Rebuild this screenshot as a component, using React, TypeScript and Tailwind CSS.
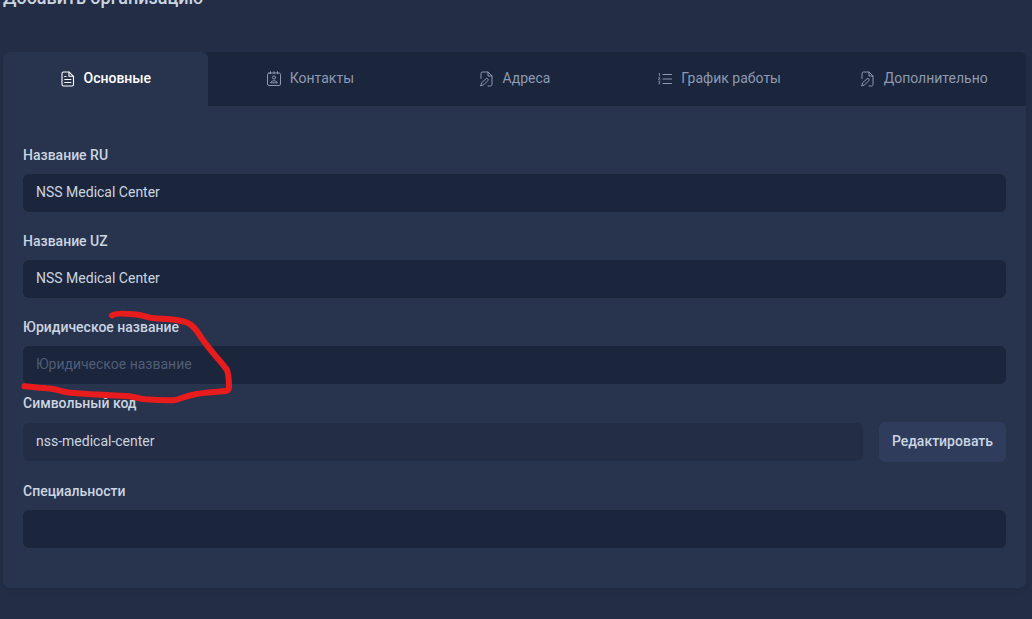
import React, { useState } from 'react';
import clsx from 'clsx';

const iconProps = {
  width: 16,
  height: 18,
  viewBox: '0 0 16 18',
  fill: 'none',
  stroke: 'currentColor',
  strokeLinecap: 'round' as const,
  strokeLinejoin: 'round' as const,
  'aria-hidden': true,
};

const FileTextIcon = () => (
  <svg {...iconProps} strokeWidth={1.1}>
    <path d="M9 3H3.500A1.500 1.500 0 0 0 2 4.500v11A1.500 1.500 0 0 0 3.500 17h8.500a1.500 1.500 0 0 0 1.500-1.500V7.300L9 3Z" />
    <path d="M9 3.200v4.100h4.300M4.700 7.500h1.300M4.700 10.500h6.200M4.700 13.500h6.200" />
  </svg>
);

const ContactIcon = () => (
  <svg {...iconProps} strokeWidth={1}>
    <rect x="1.500" y="4" width="13" height="12.500" rx="1.500" />
    <path d="M4.500 2.700v2M8 2.700v2M11.500 2.700v2" />
    <circle cx="8" cy="8.500" r="1.600" />
    <path d="M4.700 13.500c.4-1.200 1.800-1.700 3.300-1.700s2.900.5 3.300 1.700Z" />
  </svg>
);

const FileEditIcon = () => (
  <svg {...iconProps} strokeWidth={1}>
    <path d="M2 9.500V4.500A1.500 1.500 0 0 1 3.500 3H9l4 4v8.500a1.500 1.500 0 0 1-1.500 1.500H9" />
    <path d="M9 3.200V7h3.900" />
    <path d="M1.900 16.700l.7-3 4.400-3.900a1.300 1.300 0 0 1 1.800 1.900l-4.200 4.200-2.700.8Z" />
  </svg>
);

const ListIcon = () => (
  <svg {...iconProps} strokeWidth={1.1}>
    <path d="M6 5.500h8.500M6 10h8.500M6 14.500h8.500" />
    <path d="M1.800 4.900l.8-.5v2.500M1.600 8.700h1.300l-1.300 2.200h1.500M1.600 12.700h1.500l-.8 1c1.200.2.800 1.500-.7 1.200" strokeWidth={0.8} />
  </svg>
);

const tabs = [
  { id: 'main', label: 'Основные', icon: FileTextIcon },
  { id: 'contacts', label: 'Контакты', icon: ContactIcon },
  { id: 'addresses', label: 'Адреса', icon: FileEditIcon },
  { id: 'schedule', label: 'График работы', icon: ListIcon },
  { id: 'extra', label: 'Дополнительно', icon: FileEditIcon },
];

interface FieldProps {
  id: string;
  label: string;
  value?: string;
  placeholder?: string;
}

const Field: React.FC<FieldProps> = ({ id, label, value, placeholder }) => (
  <div>
    <label htmlFor={id} className="block mb-[10px] font-medium leading-[18px]">{label}</label>
    <input
      id={id}
      type="text"
      defaultValue={value}
      placeholder={placeholder}
      className="block w-full rounded-md bg-[#1b253b] px-[13px] pt-2 pb-[10px] leading-5 placeholder:text-[#505d78] focus:outline-none"
    />
  </div>
);

const App: React.FC = () => {
  const [active, setActive] = useState('main');

  return (
    <div className="relative min-h-screen overflow-hidden bg-[#232d45] pl-[3px] pr-[6px] font-['Roboto',sans-serif] text-sm text-[#cbd5e0]">
      <h2 className="-mt-4 mb-10 text-lg font-medium leading-7">Добавить организацию</h2>

      <div className="rounded-md bg-[#28334e] shadow-md shadow-black/5">
        <div role="tablist" className="grid grid-cols-5 rounded-t-md bg-[#1b253b]">
          {tabs.map(({ id, label, icon: Icon }) => (
            <button
              key={id}
              type="button"
              role="tab"
              aria-selected={active === id}
              onClick={() => setActive(id)}
              className={clsx(
                'flex items-center justify-center gap-2 pt-4 pb-[18px] leading-5',
                active === id ? 'rounded-t-md bg-[#28334e] font-medium text-white' : 'text-[#8d9ab3]'
              )}
            >
              <Icon />
              {label}
            </button>
          ))}
        </div>

        <form className="px-5 py-10" onSubmit={(e) => e.preventDefault()}>
          <div className="space-y-5">
            <Field id="name-ru" label="Название RU" value="NSS Medical Center" />
            <Field id="name-uz" label="Название UZ" value="NSS Medical Center" />
            <Field id="legal-name" label="Юридическое название" placeholder="Юридическое название" />
          </div>

          <div className="mt-[10px]">
            <label htmlFor="code" className="block mb-[10px] font-medium leading-[18px]">Символьный код</label>
            <div className="flex items-center gap-4">
              <input
                id="code"
                type="text"
                readOnly
                value="nss-medical-center"
                className="min-w-0 flex-1 rounded-md bg-[#232d45] px-[13px] pt-2 pb-[10px] leading-5 focus:outline-none"
              />
              <button type="button" className="rounded-md bg-[#303c5c] px-[13px] pt-[9px] pb-[11px] font-medium leading-5">
                Редактировать
              </button>
            </div>
          </div>

          <div className="mt-5">
            <Field id="specialities" label="Специальности" />
          </div>
        </form>
      </div>

      {/* hand-drawn marker around the legal name */}
      <svg
        className="pointer-events-none absolute left-0 top-[300px]"
        width="250"
        height="120"
        viewBox="0 0 250 120"
        fill="none"
        stroke="#e81c1c"
        strokeWidth="6"
        strokeLinecap="round"
        strokeLinejoin="round"
        aria-hidden="true"
      >
        <path d="M112 15.500C115 12.500 126 13.500 134 14.300C144 15 148 18 155 18.300C165 18.600 176 18.500 187 22.500C196 26 199 36 206 44C213 54 221 61 227 70C229 76 229 80 229 87C229 91 226 91 222 91.300C212 92 203 92.500 194 94.500C185 96 179 100 173 100.300C163 100.500 154 100 145 99.300C138 98.500 134 96.500 126 96C108 95 86 94.500 67 92.300C59 90.500 54 88.700 47 88.300C39 87.600 31 87 24.500 86.300" />
      </svg>
    </div>
  );
};

export default App;
